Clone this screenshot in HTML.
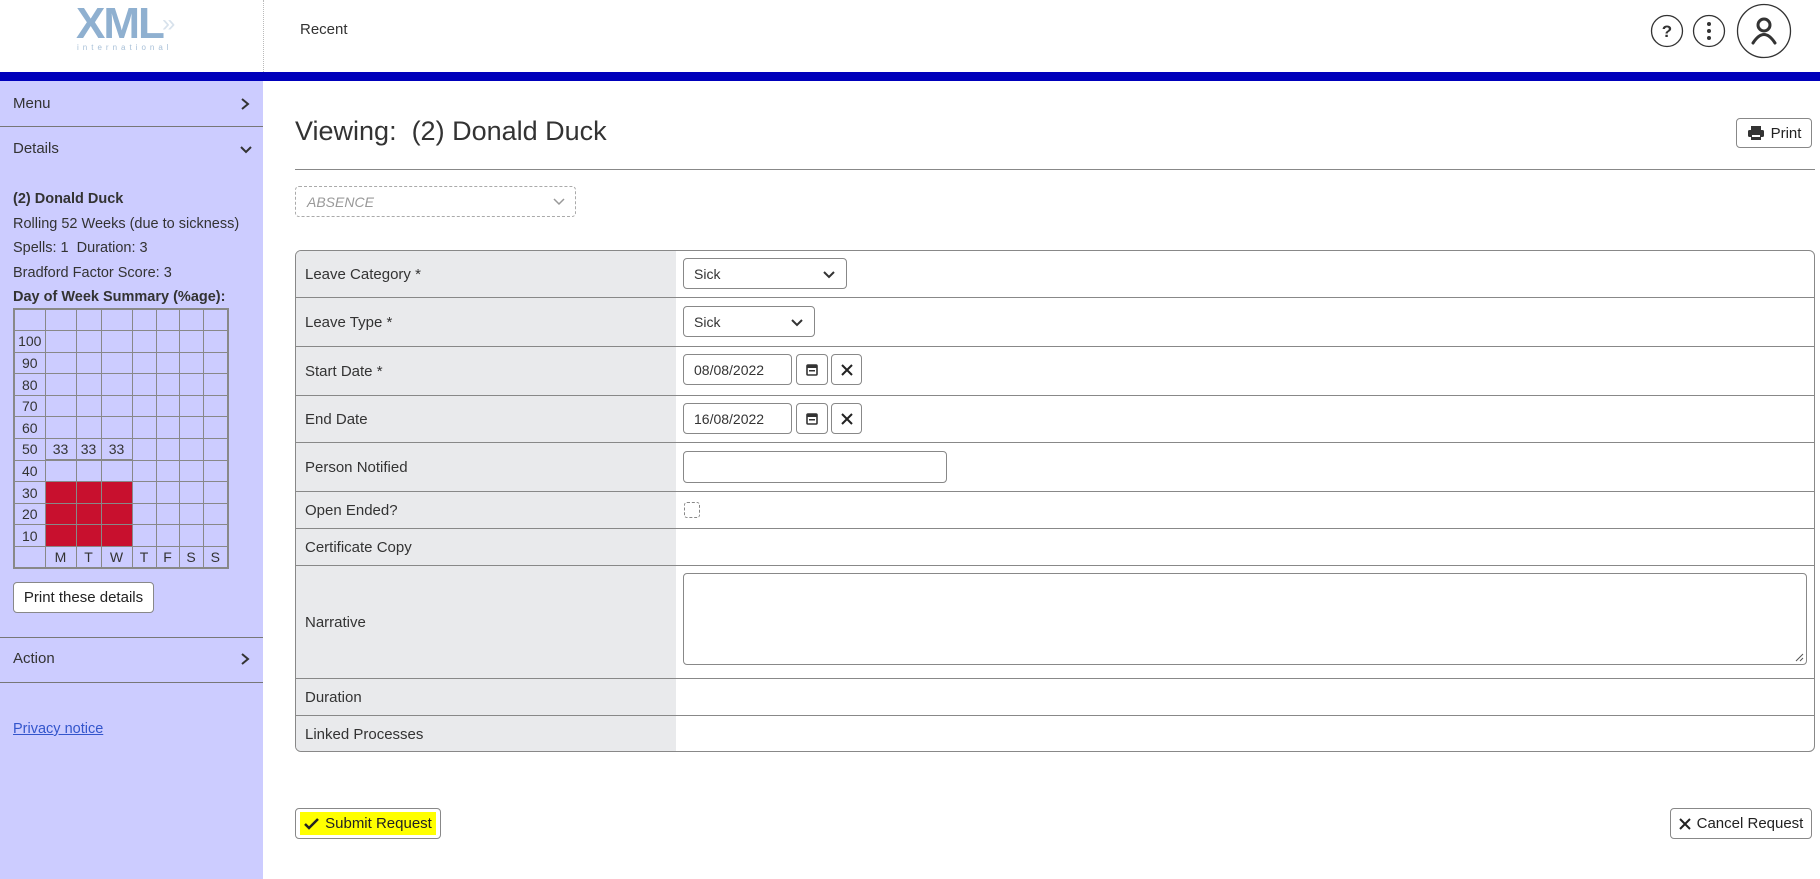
<!DOCTYPE html>
<html><head><meta charset="utf-8"><style>
*{box-sizing:border-box;margin:0;padding:0}
body{width:1820px;height:879px;overflow:hidden;font-family:"Liberation Sans",sans-serif;color:#333;background:#fff;position:relative;font-size:15px}
.a{position:absolute}
.side{left:0;top:81px;width:263px;height:798px;background:#ccccff}
.sr{position:absolute;left:0;width:263px;border-bottom:1px solid #777;font-size:15px;color:#333}
.sr span{position:absolute;left:13px}
.chev{position:absolute;right:12px}
.tbl{left:295px;top:250px;width:1520px;height:502px;border:1px solid #888;border-radius:6px;overflow:hidden}
.row{position:absolute;left:0;width:1520px;border-bottom:1px solid #888}
.row .l{position:absolute;left:0;top:0;bottom:0;width:380px;background:#e9eaec;padding-left:9px;display:flex;align-items:center;font-size:15px;color:#333}
.inp{position:absolute;border:1px solid #888;border-radius:4px;background:#fff;font-size:14px;display:flex;align-items:center;padding-left:10px}
.btn{position:absolute;border:1px solid #888;border-radius:4px;background:#fff;display:flex;align-items:center;justify-content:center}
.chart{table-layout:fixed}
.chart td{border:1px solid #888;height:21.6px;font-size:14px;text-align:center;color:#333;padding:0}
</style></head><body>
<div class="a" style="left:0;top:0;width:1820px;height:72px;background:#fff"></div>
<div class="a" style="left:76px;top:2px;font-size:44px;font-weight:bold;color:#8fb0d0;letter-spacing:-2px;line-height:44px">XML</div>
<div class="a" style="left:162px;top:12px;font-size:24px;color:#d8e2ec;line-height:24px">»</div>
<div class="a" style="left:77px;top:43px;font-size:8px;color:#a8c0d8;letter-spacing:4px">international</div>
<div class="a" style="left:263px;top:0;height:72px;border-left:1px dotted #bbb"></div>
<div class="a" style="left:300px;top:21px;font-size:15px;color:#333">Recent</div>
<svg class="a" style="left:1648px;top:0" width="160" height="66">
<circle cx="19" cy="31" r="15.5" fill="none" stroke="#333" stroke-width="1.3"/>
<text x="19" y="37" text-anchor="middle" font-family="Liberation Sans" font-weight="bold" font-size="17" fill="#333">?</text>
<circle cx="61" cy="31" r="15.5" fill="none" stroke="#333" stroke-width="1.3"/>
<circle cx="61" cy="24" r="2" fill="#333"/><circle cx="61" cy="31" r="2" fill="#333"/><circle cx="61" cy="38" r="2" fill="#333"/>
<circle cx="116" cy="31" r="26.5" fill="none" stroke="#333" stroke-width="1.3"/>
<circle cx="116" cy="25" r="6" fill="none" stroke="#333" stroke-width="3"/>
<path d="M105 43 Q116 26 127 43" fill="none" stroke="#333" stroke-width="3" stroke-linecap="round"/>
</svg>
<div class="a" style="left:0;top:72px;width:1820px;height:9px;background:#0000bb"></div>
<div class="a side"></div>
<div class="sr" style="top:81px;height:46px"><span style="top:14px">Menu</span><svg class="chev" style="top:16px" width="12" height="14"><path d="M3 2l6 5-6 5" fill="none" stroke="#333" stroke-width="2"/></svg></div>
<div class="a" style="left:13px;top:140px;font-size:15px">Details</div>
<svg class="a" style="left:239px;top:144px" width="14" height="12"><path d="M2 3l5 5 5-5" fill="none" stroke="#333" stroke-width="2"/></svg>
<div class="a" style="left:13px;top:187px;font-size:14.5px;line-height:24.5px;color:#333">
<b style="font-weight:600">(2) Donald Duck</b><br>Rolling 52 Weeks (due to sickness)<br>Spells: 1&nbsp; Duration: 3<br>Bradford Factor Score: 3<br><b style="font-weight:600">Day of Week Summary (%age):</b></div>
<table class="a chart" style="left:13px;top:308px;width:214px;border-collapse:collapse;border:2px solid #888">
<colgroup><col style="width:31px"><col style="width:31px"><col style="width:25px"><col style="width:31px"><col style="width:24px"><col style="width:23px"><col style="width:24px"><col style="width:25px"></colgroup>
<tr><td></td><td></td><td></td><td></td><td></td><td></td><td></td><td></td></tr>
<tr><td>100</td><td></td><td></td><td></td><td></td><td></td><td></td><td></td></tr>
<tr><td>90</td><td></td><td></td><td></td><td></td><td></td><td></td><td></td></tr>
<tr><td>80</td><td></td><td></td><td></td><td></td><td></td><td></td><td></td></tr>
<tr><td>70</td><td></td><td></td><td></td><td></td><td></td><td></td><td></td></tr>
<tr><td>60</td><td></td><td></td><td></td><td></td><td></td><td></td><td></td></tr>
<tr><td>50</td><td>33</td><td>33</td><td>33</td><td></td><td></td><td></td><td></td></tr>
<tr><td>40</td><td style="border-top:2px solid #888"></td><td style="border-top:2px solid #888"></td><td style="border-top:2px solid #888"></td><td></td><td></td><td></td><td></td></tr>
<tr><td>30</td><td style="background:#c8102e"></td><td style="background:#c8102e"></td><td style="background:#c8102e"></td><td></td><td></td><td></td><td></td></tr>
<tr><td>20</td><td style="background:#c8102e"></td><td style="background:#c8102e"></td><td style="background:#c8102e"></td><td></td><td></td><td></td><td></td></tr>
<tr><td>10</td><td style="background:#c8102e"></td><td style="background:#c8102e"></td><td style="background:#c8102e"></td><td></td><td></td><td></td><td></td></tr>
<tr><td></td><td>M</td><td>T</td><td>W</td><td>T</td><td>F</td><td>S</td><td>S</td></tr>
</table>
<div class="btn" style="left:13px;top:582px;width:141px;height:31px;font-size:15px;color:#222">Print these details</div>
<div class="a" style="left:0;top:637px;width:263px;border-top:1px solid #777"></div>
<div class="a" style="left:13px;top:650px;font-size:15px">Action</div>
<svg class="a" style="left:239px;top:652px" width="12" height="14"><path d="M3 2l6 5-6 5" fill="none" stroke="#333" stroke-width="2"/></svg>
<div class="a" style="left:0;top:682px;width:263px;border-top:1px solid #777"></div>
<div class="a" style="left:13px;top:721px;font-size:14.5px;color:#3355cc;text-decoration:underline">Privacy notice</div>
<div class="a" style="left:295px;top:116px;font-size:27px;color:#333">Viewing:&nbsp; (2) Donald Duck</div>
<div class="btn" style="left:1736px;top:118px;width:76px;height:30px;font-size:15px;color:#222"><svg width="18" height="16" style="margin-right:6px"><rect x="4" y="1" width="10" height="4" fill="#333"/><rect x="1" y="5" width="16" height="7" rx="1.5" fill="#333"/><rect x="4" y="10" width="10" height="5" fill="#333"/><rect x="5" y="10" width="8" height="2" fill="#fff"/></svg>Print</div>
<div class="a" style="left:295px;top:169px;width:1520px;border-top:1px solid #888"></div>
<div class="a" style="left:295px;top:186px;width:281px;height:31px;border:1px dashed #aaa;border-radius:4px;font-style:italic;color:#999;font-size:14px;padding:7px 11px">ABSENCE
<svg style="position:absolute;right:10px;top:11px" width="12" height="8"><path d="M1 1l5 5 5-5" fill="none" stroke="#999" stroke-width="1.5"/></svg></div>
<div class="a tbl">
<div class="row" style="top:0;height:47px"><div class="l">Leave Category *</div></div>
<div class="row" style="top:47px;height:49px"><div class="l">Leave Type *</div></div>
<div class="row" style="top:96px;height:49px"><div class="l">Start Date *</div></div>
<div class="row" style="top:145px;height:47px"><div class="l">End Date</div></div>
<div class="row" style="top:192px;height:49px"><div class="l">Person Notified</div></div>
<div class="row" style="top:241px;height:37px"><div class="l">Open Ended?</div></div>
<div class="row" style="top:278px;height:37px"><div class="l">Certificate Copy</div></div>
<div class="row" style="top:315px;height:113px"><div class="l">Narrative</div></div>
<div class="row" style="top:428px;height:37px"><div class="l">Duration</div></div>
<div class="row" style="top:465px;height:37px;border-bottom:0"><div class="l">Linked Processes</div></div>
</div>
<div class="inp" style="left:683px;top:258px;width:164px;height:31px">Sick<svg style="position:absolute;right:11px;top:12px" width="12" height="8"><path d="M1 1l5 5 5-5" fill="none" stroke="#333" stroke-width="2"/></svg></div>
<div class="inp" style="left:683px;top:306px;width:132px;height:31px">Sick<svg style="position:absolute;right:11px;top:12px" width="12" height="8"><path d="M1 1l5 5 5-5" fill="none" stroke="#333" stroke-width="2"/></svg></div>
<div class="inp" style="left:683px;top:354px;width:109px;height:31px">08/08/2022</div>
<div class="btn" style="left:796px;top:354px;width:32px;height:31px"><svg width="12" height="13"><rect x="1" y="2" width="10" height="10" rx="1" fill="none" stroke="#333" stroke-width="1.6"/><rect x="1" y="2" width="10" height="3" fill="#333"/><rect x="3" y="7" width="6" height="1.5" fill="#333"/></svg></div>
<div class="btn" style="left:831px;top:354px;width:31px;height:31px"><svg width="12" height="12"><path d="M1 1l10 10M11 1L1 11" stroke="#222" stroke-width="2"/></svg></div>
<div class="inp" style="left:683px;top:403px;width:109px;height:31px">16/08/2022</div>
<div class="btn" style="left:796px;top:403px;width:32px;height:31px"><svg width="12" height="13"><rect x="1" y="2" width="10" height="10" rx="1" fill="none" stroke="#333" stroke-width="1.6"/><rect x="1" y="2" width="10" height="3" fill="#333"/><rect x="3" y="7" width="6" height="1.5" fill="#333"/></svg></div>
<div class="btn" style="left:831px;top:403px;width:31px;height:31px"><svg width="12" height="12"><path d="M1 1l10 10M11 1L1 11" stroke="#222" stroke-width="2"/></svg></div>
<div class="inp" style="left:683px;top:451px;width:264px;height:32px"></div>
<div class="a" style="left:684px;top:502px;width:16px;height:16px;border:1px dashed #888;border-radius:3px"></div>
<div class="inp" style="left:683px;top:573px;width:1124px;height:92px"><svg style="position:absolute;right:2px;bottom:2px" width="10" height="10"><path d="M9 2L2 9M9 6L6 9" stroke="#555" stroke-width="1"/></svg></div>
<div class="btn" style="left:295px;top:808px;width:146px;height:31px;font-size:15px;color:#222"><span style="background:#ffff00;padding:3px 4px;display:flex;align-items:center"><svg width="15" height="12" style="margin-right:6px"><path d="M1 6l4 4 9-9" fill="none" stroke="#222" stroke-width="2.5"/></svg>Submit Request</span></div>
<div class="btn" style="left:1670px;top:808px;width:142px;height:31px;font-size:15px;color:#222"><svg width="12" height="12" style="margin-right:6px"><path d="M1 1l10 10M11 1L1 11" stroke="#222" stroke-width="2"/></svg>Cancel Request</div>
</body></html>
